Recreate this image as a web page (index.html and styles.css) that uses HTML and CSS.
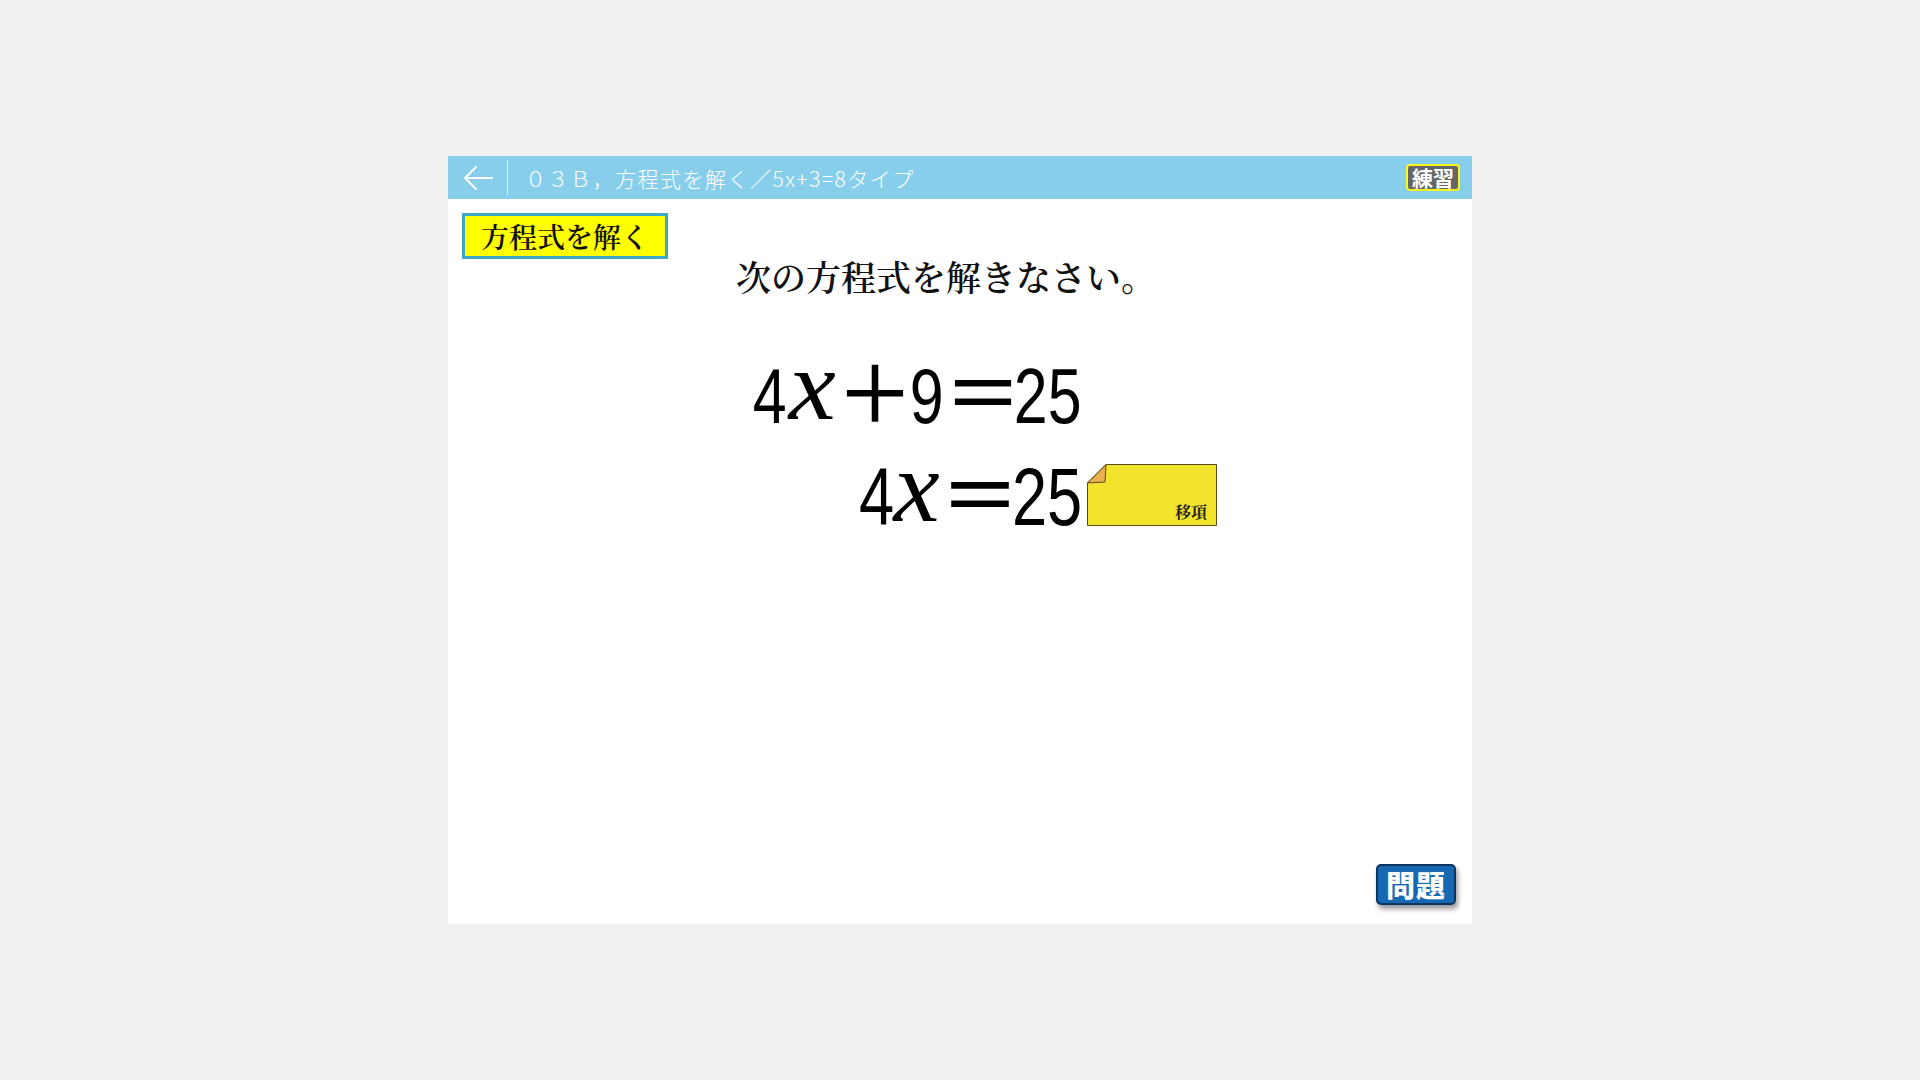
FILE: index.html
```html
<!DOCTYPE html>
<html lang="ja">
<head>
<meta charset="utf-8">
<title>方程式を解く</title>
<link rel="stylesheet" href="styles.css">
</head>
<body>
<div class="panel">
  <header class="topbar">
    <span class="back">
      <svg width="32" height="26" viewBox="0 0 32 26"><path d="M30 13H3M14 2L3 13L14 24" fill="none" stroke="#fff" stroke-width="1.8" stroke-linecap="round" stroke-linejoin="round"/></svg>
    </span>
    <span class="sep"></span>
    <span class="title">０３Ｂ，方程式を解く／5x+3=8タイプ</span>
    <span class="badge">練習</span>
  </header>
  <main class="content">
    <div class="top">
      <div class="label">方程式を解く</div>
      <p class="prompt">次の方程式を解きなさい。</p>
    </div>
    <div class="eqgrid">
      <div class="eq eq1">
        <span class="tk num"><span>4</span></span>
        <span class="tk var"><span>x</span></span>
        <span class="tk op plus"><span>＋</span></span>
        <span class="tk num"><span>9</span></span>
        <span class="tk op eqs"><span>＝</span></span>
        <span class="tk num"><span>2</span></span>
        <span class="tk num"><span>5</span></span>
      </div>
      <div class="eq eq2">
        <span class="tk num"><span>4</span></span>
        <span class="tk var"><span>x</span></span>
        <span class="tk op eqs"><span>＝</span></span>
        <span class="tk num"><span>2</span></span>
        <span class="tk num"><span>5</span></span>
      </div>
      <div class="note">
        <svg class="note-bg" width="130" height="62" viewBox="0 0 130 62">
          <path d="M19 0.5H129.5V61.5H0.5V19Z" fill="#f1e42a" stroke="#5b4a1e" stroke-width="1"/>
          <path d="M0.5 19L19 0.5L18 18Z" fill="#e9af4c" stroke="#5b4a1e" stroke-width="1" stroke-linejoin="round"/>
        </svg>
        <span class="note-text">移項</span>
      </div>
    </div>
    <button class="mondai">問題</button>
  </main>
</div>
</body>
</html>
```
FILE: styles.css
```css
html, body {
  margin: 0;
  padding: 0;
}
body {
  background: #f0f0f0;
  height: 100vh;
  display: flex;
  align-items: center;
  justify-content: center;
  font-family: "Noto Sans CJK JP", "Noto Sans", sans-serif;
}
.panel {
  width: 1024px;
  height: 768px;
  background: #ffffff;
  display: flex;
  flex-direction: column;
}
.topbar {
  height: 43px;
  flex: 0 0 43px;
  background: #87ceeb;
  display: flex;
  align-items: center;
  color: #ffffff;
}
.back {
  display: flex;
  align-items: center;
  margin-left: 14px;
  width: 32px;
  height: 26px;
}
.sep {
  width: 1px;
  height: 35px;
  background: rgba(255,255,255,0.7);
  margin-left: 13px;
}
.title {
  margin-left: 17px;
  font-size: 21px;
  font-weight: 300;
  letter-spacing: 1.5px;
  color: #ffffff;
}
.badge {
  margin-left: auto;
  margin-right: 12px;
  width: 54px;
  height: 27px;
  box-sizing: border-box;
  border: 2px solid #f7f71e;
  border-radius: 4px;
  background: #666666;
  color: #ffffff;
  font-size: 21px;
  font-weight: 700;
  display: flex;
  align-items: center;
  justify-content: center;
  line-height: 1;
}
.content {
  flex: 1 1 auto;
  display: flex;
  flex-direction: column;
  padding: 14px 0 0 14px;
}
.top {
  display: flex;
  align-items: flex-start;
}
.label {
  width: 206px;
  height: 46px;
  box-sizing: border-box;
  border: 3px solid #3ea8c8;
  background: #ffff00;
  display: flex;
  align-items: center;
  justify-content: center;
  font-family: "Noto Serif CJK JP", "Noto Sans CJK JP", serif;
  font-size: 28px;
  font-weight: 600;
  color: #111;
  line-height: 1;
}
.prompt {
  margin: 42px 0 0 68px;
  font-family: "Noto Serif CJK JP", "Noto Sans CJK JP", serif;
  font-size: 35px;
  font-weight: 600;
  line-height: 42px;
  color: #111;
}
.eqgrid {
  margin: 52px 0 0 291px;
  display: grid;
  grid-template-columns: 329px 130px;
  grid-template-rows: 101px auto;
  column-gap: 5px;
}
.eq {
  display: flex;
  justify-content: flex-end;
  align-items: baseline;
  grid-column: 1;
  color: #000;
}
.eq1 { grid-row: 1; }
.eq2 { grid-row: 2; }
.tk {
  display: inline-flex;
  justify-content: flex-start;
  line-height: 80px;
  white-space: nowrap;
}
.num {
  width: 34px;
  justify-content: center;
  font-family: "Liberation Sans", Arial, sans-serif;
  font-size: 78px;
}
.num > span {
  display: inline-block;
  transform: scaleX(0.78);
}
.var {
  width: 49px;
  justify-content: center;
  font-family: "Liberation Serif", serif;
  font-style: italic;
  font-size: 100px;
}
.var > span {
  display: inline-block;
  transform: translate(1px, -4px) scaleX(1.06);
}
.op {
  font-family: "Noto Sans CJK JP", sans-serif;
  font-weight: 500;
  font-size: 78px;
}
.plus { width: 74px; letter-spacing: -4px; }
.eqs { width: 70px; letter-spacing: -8px; }
.eq2 .num { width: 35px; font-size: 81px; }
.eq2 .var { width: 46px; font-size: 102px; }
.eq2 .var > span { transform: translate(0px, -4px) scaleX(1.02); }
.eq2 .op { font-size: 80px; }
.eq2 .eqs { width: 72px; letter-spacing: -8px; }
.note {
  grid-column: 2;
  grid-row: 2;
  align-self: start;
  margin-top: 14px;
  width: 130px;
  height: 62px;
  position: relative;
  display: flex;
  align-items: flex-end;
  justify-content: flex-end;
  box-sizing: border-box;
  padding: 0 10px 6px 0;
}
.note-bg {
  position: absolute;
  left: 0;
  top: 0;
}
.note-text {
  position: relative;
  font-family: "Noto Serif CJK JP", "Noto Sans CJK JP", serif;
  font-size: 16px;
  font-weight: 700;
  line-height: 1;
  color: #222;
}
.mondai {
  margin: auto 16px 19px 0;
  align-self: flex-end;
  width: 80px;
  height: 41px;
  box-sizing: border-box;
  border: 2px solid #0b355e;
  border-radius: 5px;
  background: #1668b2;
  color: #ffffff;
  font-family: "Noto Sans CJK JP", sans-serif;
  font-size: 29px;
  font-weight: 900;
  line-height: 1;
  padding: 0;
  display: flex;
  align-items: center;
  justify-content: center;
  letter-spacing: 1px;
  box-shadow: 2px 4px 5px rgba(0,0,0,0.4);
}
```
